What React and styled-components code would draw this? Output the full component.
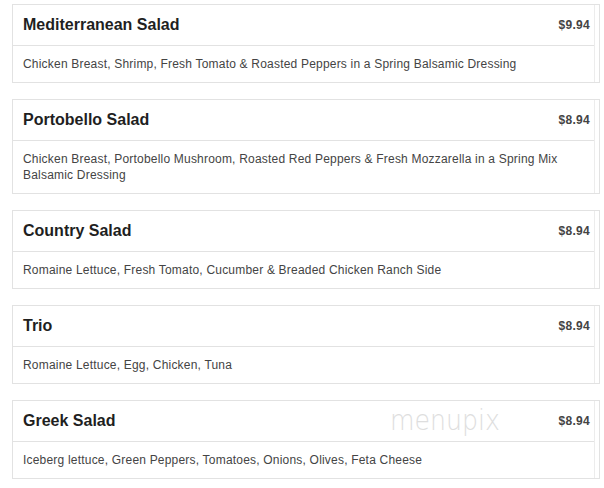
import React from "react";
import styled, { createGlobalStyle } from "styled-components";

const items = [
  {
    name: "Mediterranean Salad",
    price: "$9.94",
    desc: "Chicken Breast, Shrimp, Fresh Tomato & Roasted Peppers in a Spring Balsamic Dressing",
  },
  {
    name: "Portobello Salad",
    price: "$8.94",
    desc: "Chicken Breast, Portobello Mushroom, Roasted Red Peppers & Fresh Mozzarella in a Spring Mix Balsamic Dressing",
  },
  {
    name: "Country Salad",
    price: "$8.94",
    desc: "Romaine Lettuce, Fresh Tomato, Cucumber & Breaded Chicken Ranch Side",
  },
  {
    name: "Trio",
    price: "$8.94",
    desc: "Romaine Lettuce, Egg, Chicken, Tuna",
  },
  {
    name: "Greek Salad",
    price: "$8.94",
    desc: "Iceberg lettuce, Green Peppers, Tomatoes, Onions, Olives, Feta Cheese",
    watermark: true,
  },
];

const GlobalStyle = createGlobalStyle`
  html, body {
    margin: 0;
    padding: 0;
    background: #fff;
  }
  body {
    font-family: "Liberation Sans", Arial, sans-serif;
  }
`;

const List = styled.div`
  width: 604px;
  padding: 4px 4px 0 12px;
  box-sizing: border-box;
  display: flex;
  flex-direction: column;
  gap: 16px;
`;

const Card = styled.div`
  position: relative;
  border: 1px solid #e2e2e2;
  background: #fff;
`;

const Inner = styled.div`
  margin-right: 4px;
  border-right: 1px solid #ececec;
`;

const Header = styled.div`
  display: flex;
  align-items: center;
  justify-content: space-between;
  height: 40px;
  padding: 0 4px 0 10px;
  border-bottom: 1px solid #e2e2e2;
`;

const Title = styled.h3`
  margin: 0;
  font-size: 16px;
  font-weight: bold;
  color: #1f1f1f;
`;

const Price = styled.span`
  font-size: 12px;
  font-weight: bold;
  letter-spacing: 0.3px;
  color: #444;
`;

const Desc = styled.p`
  margin: 0;
  padding: 10px 12px 10px 10px;
  font-size: 12px;
  line-height: 16px;
  letter-spacing: 0.2px;
  color: #444;
`;

const Watermark = styled.span`
  position: absolute;
  left: 377px;
  top: 3px;
  font-family: "DejaVu Sans", sans-serif;
  font-weight: 200;
  font-size: 28px;
  transform: scaleX(0.9);
  transform-origin: left center;
  color: #dedede;
  pointer-events: none;
`;

export default function App() {
  return (
    <>
      <GlobalStyle />
      <List>
        {items.map((item) => (
          <Card key={item.name}>
            <Inner>
              <Header>
                <Title>{item.name}</Title>
                <Price>{item.price}</Price>
              </Header>
              <Desc>{item.desc}</Desc>
            </Inner>
            {item.watermark && <Watermark>menupix</Watermark>}
          </Card>
        ))}
      </List>
    </>
  );
}
